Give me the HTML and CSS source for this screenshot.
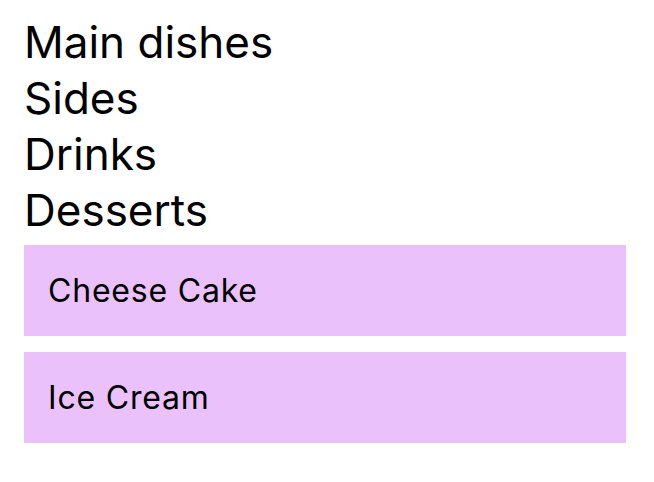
FILE: index.html
```html
<!DOCTYPE html>
<html>
<head>
<meta charset="utf-8">
<link rel="stylesheet" href="styles.css">
</head>
<body>
<div class="page">
  <ul class="menu">
    <li>Main dishes</li>
    <li>Sides</li>
    <li>Drinks</li>
    <li>Desserts</li>
  </ul>
  <div class="items">
    <div class="item">Cheese Cake</div>
    <div class="item">Ice Cream</div>
  </div>
</div>
</body>
</html>
```
FILE: styles.css
```css
html, body {
  margin: 0;
  padding: 0;
  background: #fff;
}
body {
  font-family: Inter, "Noto Sans", sans-serif;
  color: #000;
}
.page {
  padding: 14px 28px 0 24px;
}
.menu {
  list-style: none;
  margin: 0;
  padding: 0;
  font-size: 44px;
  line-height: 56px;
}
.items {
  margin-top: 7px;
  display: flex;
  flex-direction: column;
  gap: 16px;
  width: 602px;
}
.item {
  background: #eac1fb;
  height: 91px;
  padding: 0 24px;
  display: flex;
  align-items: center;
  font-size: 32px;
  letter-spacing: 0.8px;
}
```
